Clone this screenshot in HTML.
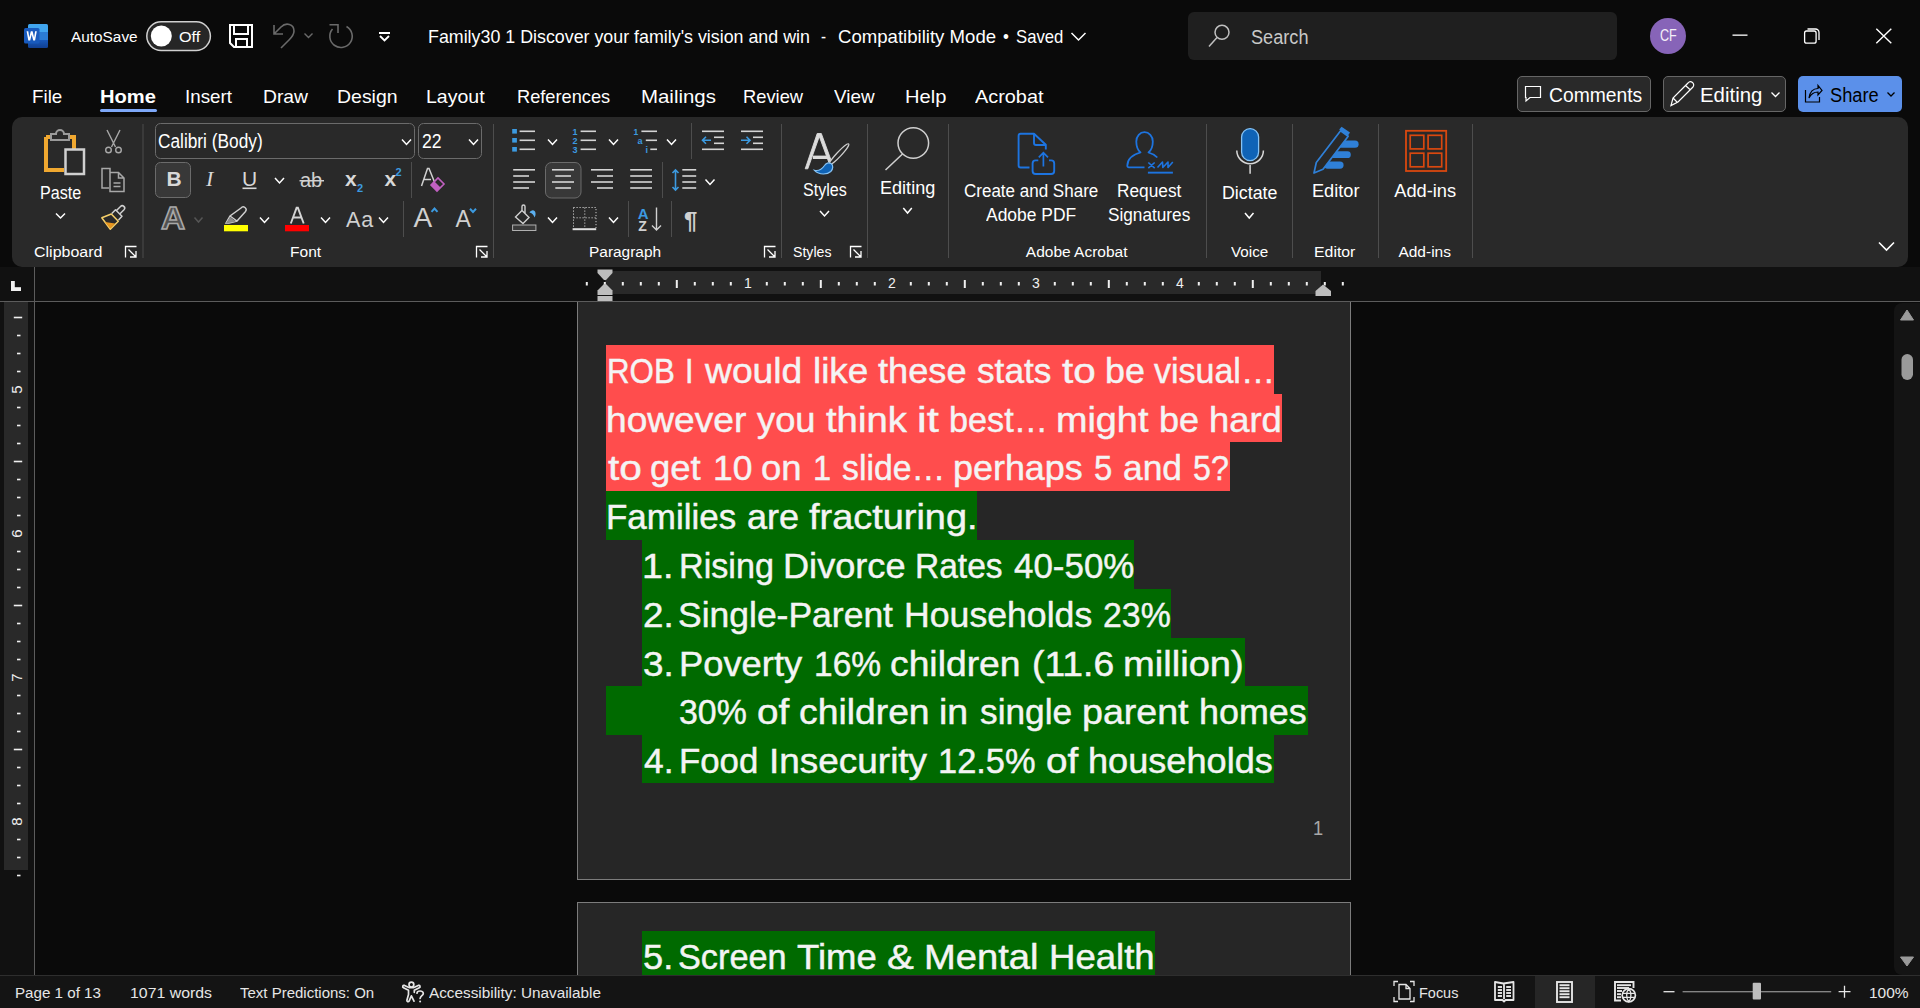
<!DOCTYPE html>
<html><head><meta charset="utf-8"><style>
html,body{margin:0;padding:0;width:1920px;height:1008px;overflow:hidden;background:#0a0a0a;}
body{position:relative;font-family:'Liberation Sans', sans-serif;}
</style></head><body>
<div style="position:absolute;left:0px;top:0px;width:1920px;height:117px;background:#0a0a0a;"></div>
<div style="position:absolute;left:12px;top:117px;width:1896px;height:150px;background:#292929;border-radius:10px;"></div>
<div style="position:absolute;left:0px;top:267px;width:1920px;height:34px;background:#111111;"></div>
<div style="position:absolute;left:605px;top:271px;width:716px;height:23px;background:#292929;"></div>
<div style="position:absolute;left:0px;top:301px;width:1920px;height:1px;background:#5c5c5c;"></div>
<div style="position:absolute;left:0px;top:302px;width:34px;height:674px;background:#111111;"></div>
<div style="position:absolute;left:4px;top:302px;width:24px;height:568px;background:#292929;"></div>
<div style="position:absolute;left:34px;top:267px;width:1px;height:708px;background:#5c5c5c;"></div>
<div style="position:absolute;left:35px;top:302px;width:1859px;height:673px;background:#0a0a0a;"></div>
<div style="position:absolute;left:577px;top:302px;width:774px;height:578px;box-sizing:border-box;background:#262626;border:1px solid #7c7c7c;border-top:none;"></div>
<div style="position:absolute;left:577px;top:902px;width:774px;height:73px;box-sizing:border-box;background:#262626;border:1px solid #7c7c7c;border-bottom:none;"></div>
<div style="position:absolute;left:1894px;top:303px;width:26px;height:672px;background:#141414;border-radius:8px 0 0 8px;"></div>
<div style="position:absolute;left:0px;top:975px;width:1920px;height:1px;background:#2e2e2e;"></div>
<div style="position:absolute;left:0px;top:976px;width:1920px;height:32px;background:#141414;"></div>
<div style="position:absolute;left:1188px;top:12px;width:429px;height:48px;background:#1f1f1f;border-radius:6px;"></div>
<div style="position:absolute;left:1650px;top:18px;width:36px;height:36px;background:#8764b8;border-radius:50%;"></div>
<div style="position:absolute;left:100px;top:109px;width:57px;height:3px;background:#7ea8f8;border-radius:2px;"></div>
<div style="position:absolute;left:1517px;top:76px;width:134px;height:36px;box-sizing:border-box;background:#292929;border:1px solid #666;border-radius:5px;"></div>
<div style="position:absolute;left:1663px;top:76px;width:123px;height:36px;box-sizing:border-box;background:#292929;border:1px solid #666;border-radius:5px;"></div>
<div style="position:absolute;left:1798px;top:76px;width:104px;height:36px;background:#5b90ea;border-radius:5px;"></div>
<svg style="position:absolute;left:0;top:0" width="1920" height="1008" viewBox="0 0 1920 1008"><defs><linearGradient id="wg" x1="0" y1="0" x2="0" y2="1">
<stop offset="0" stop-color="#41a5ee"/><stop offset="0.33" stop-color="#41a5ee"/><stop offset="0.33" stop-color="#2b7cd3"/>
<stop offset="0.66" stop-color="#2b7cd3"/><stop offset="0.66" stop-color="#185abd"/><stop offset="1" stop-color="#103f91"/></linearGradient></defs>
<rect x="28" y="24" width="20" height="24" rx="1.5" fill="url(#wg)"/>
<rect x="24" y="28" width="15.5" height="15.5" rx="1.5" fill="#185abd"/>
<path d="M26.6 31.2 L28.3 40.5 L30.2 40.5 L31.7 34.6 L33.2 40.5 L35.1 40.5 L36.8 31.2 L35.1 31.2 L34.1 37.4 L32.6 31.2 L30.8 31.2 L29.3 37.4 L28.3 31.2 Z" fill="#fff"/>
<rect x="146.8" y="21.8" width="63.6" height="28.6" rx="14.3" fill="#262626" stroke="#d0d0d0" stroke-width="1.5"/>
<circle cx="161.3" cy="36" r="10.5" fill="#fff"/>
<path d="M230 25 H252 V47 H234 L230 43 Z M234 25 V34 H248 V25 M236 47 V39 H247 V47" fill="none" stroke="#ffffff" stroke-width="2"/>
<path d="M274 25 V34 H283 M274 34 L281 27 C286 22 294 24 294 31 C294 35 291 38 289 40 L281 48" fill="none" stroke="#6a6a6a" stroke-width="1.6"/>
<path d="M304.5 33.5 L308.5 37.5 L312.5 33.5" fill="none" stroke="#6a6a6a" stroke-width="1.4"/>
<path d="M346.5 26.5 A11.2 11.2 0 1 1 332.5 29" fill="none" stroke="#6a6a6a" stroke-width="1.6"/><path d="M329.5 24.8 H338 V33" fill="none" stroke="#6a6a6a" stroke-width="1.6"/>
<rect x="379" y="32" width="11" height="2" fill="#ffffff"/><path d="M380 36 L384.5 40.5 L389 36" fill="none" stroke="#ffffff" stroke-width="1.8"/>
<path d="M1071.5 33 L1078.5 40 L1085.5 33" fill="none" stroke="#ffffff" stroke-width="1.5"/>
<circle cx="1222" cy="32.3" r="7" fill="none" stroke="#c0c0c0" stroke-width="1.5"/><path d="M1217 37.5 L1209 46.5" stroke="#c0c0c0" stroke-width="1.5"/>
<rect x="1732.5" y="34.5" width="15" height="1.3" fill="#ffffff"/>
<rect x="1804.6" y="31" width="11.5" height="12.2" rx="2" fill="none" stroke="#ffffff" stroke-width="1.3"/><path d="M1807.5 29 H1815.5 A3.5 3.5 0 0 1 1819 32.5 V40" fill="none" stroke="#ffffff" stroke-width="1.3"/>
<path d="M1876.3 28.8 L1891.3 43.3 M1891.3 28.8 L1876.3 43.3" stroke="#ffffff" stroke-width="1.4"/>
<path d="M1525.5 86.5 H1540.5 V97.5 H1530 L1526 101 V97.5 H1525.5 Z" fill="none" stroke="#ffffff" stroke-width="1.2"/>
<path d="M1671 105.5 L1673 98 L1688 83 A2.5 2.5 0 0 1 1693 87 L1678 102 Z M1673 98 L1677.5 102.5 M1685.5 85.5 L1690.5 90" fill="none" stroke="#ffffff" stroke-width="1.2"/>
<path d="M1771.5 92.5 L1775.5 96.5 L1779.5 92.5" fill="none" stroke="#ffffff" stroke-width="1.3"/>
<path d="M1805.5 90 V102 H1819.5 V97 M1809 98 C1810 91 1814 88.5 1818 88.5 V85.5 L1822 90.5 L1818 95 V92 C1814 92 1811 94 1809 98 Z" fill="none" stroke="#000" stroke-width="1.2"/>
<path d="M1887.5 92.5 L1891 96 L1894.5 92.5" fill="none" stroke="#000" stroke-width="1.3"/>
<rect x="142.5" y="124" width="1" height="134" fill="#4d4d4d"/>
<rect x="493.0" y="124" width="1" height="134" fill="#4d4d4d"/>
<rect x="781.0" y="124" width="1" height="134" fill="#4d4d4d"/>
<rect x="867.0" y="124" width="1" height="134" fill="#4d4d4d"/>
<rect x="948.0" y="124" width="1" height="134" fill="#4d4d4d"/>
<rect x="1206.0" y="124" width="1" height="134" fill="#4d4d4d"/>
<rect x="1292.0" y="124" width="1" height="134" fill="#4d4d4d"/>
<rect x="1378.0" y="124" width="1" height="134" fill="#4d4d4d"/>
<rect x="1472.0" y="124" width="1" height="134" fill="#4d4d4d"/>
<rect x="411.0" y="162" width="1" height="36" fill="#4d4d4d"/>
<rect x="403.0" y="201" width="1" height="36" fill="#4d4d4d"/>
<rect x="691.0" y="123" width="1" height="36" fill="#4d4d4d"/>
<rect x="662.0" y="162" width="1" height="36" fill="#4d4d4d"/>
<rect x="628.0" y="201" width="1" height="36" fill="#4d4d4d"/>
<rect x="671.0" y="201" width="1" height="36" fill="#4d4d4d"/>
<path d="M46 137 H52 M68 137 H74 V149 M46 137 V170 H64" fill="none" stroke="#f0a830" stroke-width="4"/>
<path d="M51 140 V134 H56 A4 4 0 0 1 64 134 H69 V140 Z" fill="none" stroke="#9a9a9a" stroke-width="2"/>
<rect x="65.5" y="149.5" width="18.5" height="24.5" fill="none" stroke="#d0d0d0" stroke-width="2.5"/>
<path d="M56 213.5 L60.5 218 L65 213.5" fill="none" stroke="#ffffff" stroke-width="1.5"/>
<path d="M107 130 L115.5 147 M120 130 L111.5 147" fill="none" stroke="#a8a8a8" stroke-width="1.4"/><circle cx="108.5" cy="150" r="2.8" fill="none" stroke="#a8a8a8" stroke-width="1.4"/><circle cx="118.5" cy="150" r="2.8" fill="none" stroke="#a8a8a8" stroke-width="1.4"/>
<path d="M110 172 V168.5 H102 V188 H109" fill="none" stroke="#a8a8a8" stroke-width="1.5"/><path d="M110 172.5 H118.5 L124 178 V191.5 H110 Z M118.5 172.5 V178 H124 M113.5 183 H120.5 M113.5 186.5 H120.5" fill="none" stroke="#a8a8a8" stroke-width="1.5"/>
<path d="M101.8 217.8 L111.3 214 L118.3 221.2 L110.3 229.2 Z" fill="none" stroke="#f5cf6a" stroke-width="1.5" stroke-linejoin="round"/>
<path d="M105 222 L115 223.5 L110.3 228.5 Z" fill="#e8961e"/>
<path d="M111.8 213.5 L115.5 209.8 L122 216.3 L118.5 220" fill="none" stroke="#d0d0d0" stroke-width="1.5" stroke-linejoin="round"/>
<path d="M116.5 210.5 L120.5 206.5 A2.2 2.2 0 0 1 124 209.8 L120 213.8" fill="none" stroke="#d0d0d0" stroke-width="1.5"/>
<path d="M125.5 257.5 V246.5 H136.5 M128.5 249.5 L136 257 M136 251 V257 H130" fill="none" stroke="#ffffff" stroke-width="1.3"/>
<path d="M476.5 257.5 V246.5 H487.5 M479.5 249.5 L487 257 M487 251 V257 H481" fill="none" stroke="#ffffff" stroke-width="1.3"/>
<path d="M764.5 257.5 V246.5 H775.5 M767.5 249.5 L775 257 M775 251 V257 H769" fill="none" stroke="#ffffff" stroke-width="1.3"/>
<path d="M850.5 257.5 V246.5 H861.5 M853.5 249.5 L861 257 M861 251 V257 H855" fill="none" stroke="#ffffff" stroke-width="1.3"/>
<rect x="155.5" y="123.5" width="259" height="35" rx="5" fill="none" stroke="#6b6b6b" stroke-width="1"/>
<rect x="418.5" y="123.5" width="63" height="35" rx="5" fill="none" stroke="#6b6b6b" stroke-width="1"/>
<path d="M402 139.5 L406.5 144.5 L411 139.5" fill="none" stroke="#ffffff" stroke-width="1.5"/>
<path d="M469 139.5 L473.5 144.5 L478 139.5" fill="none" stroke="#ffffff" stroke-width="1.5"/>
<rect x="155.5" y="162.5" width="35" height="35" rx="5" fill="#383838" stroke="#6b6b6b" stroke-width="1"/>
<text x="166.5" y="185.8" font-family="Liberation Sans" font-weight="bold" font-size="21" fill="#d8d8d8">B</text>
<text x="206" y="185.8" font-family="Liberation Serif" font-style="italic" font-size="22" fill="#d8d8d8">I</text>
<text x="242" y="185.8" font-family="Liberation Sans" font-size="21" fill="#d8d8d8">U</text><rect x="242.5" y="187.5" width="14" height="1.6" fill="#d8d8d8"/>
<path d="M275 178 L279.5 183 L284 178" fill="none" stroke="#ffffff" stroke-width="1.5"/>
<text x="300" y="187" font-family="Liberation Sans" font-size="20" fill="#d0d0d0">ab</text><rect x="299.5" y="180" width="24.5" height="1.5" fill="#d0d0d0"/>
<text x="345" y="185.8" font-family="Liberation Sans" font-weight="bold" font-size="21" fill="#d8d8d8">x</text><text x="357" y="191.5" font-family="Liberation Sans" font-weight="bold" font-size="11" fill="#3c9ae0">2</text>
<text x="384.5" y="185.8" font-family="Liberation Sans" font-weight="bold" font-size="21" fill="#d8d8d8">x</text><text x="395.5" y="176" font-family="Liberation Sans" font-weight="bold" font-size="11" fill="#3c9ae0">2</text>
<path d="M421.5 186 L427.5 168.5 H429 L434.5 182 M424 179.5 H431" fill="none" stroke="#d0d0d0" stroke-width="1.5"/><path d="M431 185 L438 178 L444 184 L437 191 Z" fill="none" stroke="#c060c0" stroke-width="1.6"/><path d="M431 185 L434.5 181.5 L440.5 187.5 L437 191 Z" fill="#c060c0"/>
<text x="161" y="229.3" font-family="Liberation Sans" font-weight="bold" font-size="31" fill="#505050" stroke="#a8a8a8" stroke-width="1.5" transform="translate(161 0) scale(1.08 1) translate(-161 0)">A</text>
<path d="M194.5 217.5 L198.5 222.0 L202.5 217.5" fill="none" stroke="#555" stroke-width="1.5"/>
<path d="M226 223 L230 216 L241 208 A2 2 0 0 1 245.5 211.5 L237 221 L229 223 Z M230 216 L237 221" fill="none" stroke="#d0d0d0" stroke-width="1.4"/><path d="M226 223 L230 217 L236 221.5 L229 223 Z" fill="#8a8a8a"/>
<rect x="224" y="225" width="24" height="6.3" fill="#ffff00"/>
<path d="M260 217.5 L264.5 222.5 L269 217.5" fill="none" stroke="#ffffff" stroke-width="1.5"/>
<path d="M290.8 223.5 L296.6 207.8 H297.9 L303.7 223.5 M293.2 217.5 H301.3" fill="none" stroke="#d4d4d4" stroke-width="1.9"/><rect x="285" y="225" width="24" height="6.3" fill="#ff0000"/>
<path d="M321 217.5 L325.5 222.5 L330 217.5" fill="none" stroke="#ffffff" stroke-width="1.5"/>
<text x="346" y="226.8" font-family="Liberation Sans" font-size="21.5" letter-spacing="1" fill="#d0d0d0">Aa</text>
<path d="M379 217.5 L383.5 222.5 L388 217.5" fill="none" stroke="#ffffff" stroke-width="1.5"/>
<text x="413.5" y="227" font-family="Liberation Sans" font-size="28" fill="#d0d0d0">A</text><path d="M431.5 211.8 L434.5 208.5 L437.5 211.8" fill="none" stroke="#3c9ae0" stroke-width="2"/>
<text x="455.5" y="227" font-family="Liberation Sans" font-size="23" fill="#d0d0d0">A</text><path d="M470 208.8 L473 212 L476 208.8" fill="none" stroke="#3c9ae0" stroke-width="2"/>
<rect x="512.2" y="129.0" width="4.7" height="4.6" fill="#3c9ae0"/>
<rect x="519.6" y="130.5" width="15.399999999999977" height="1.6" fill="#d4d4d4"/>
<rect x="512.2" y="138.0" width="4.7" height="4.6" fill="#3c9ae0"/>
<rect x="519.6" y="139.5" width="15.399999999999977" height="1.6" fill="#d4d4d4"/>
<rect x="512.2" y="147.0" width="4.7" height="4.6" fill="#3c9ae0"/>
<rect x="519.6" y="148.5" width="15.399999999999977" height="1.6" fill="#d4d4d4"/>
<path d="M548 139.5 L552.5 144.5 L557 139.5" fill="none" stroke="#ffffff" stroke-width="1.5"/>
<text x="572.6" y="134.70000000000002" font-family="Liberation Sans" font-weight="bold" font-size="9" fill="#3c9ae0">1</text>
<rect x="580.6" y="130.5" width="15.399999999999977" height="1.6" fill="#d4d4d4"/>
<text x="572.6" y="143.70000000000002" font-family="Liberation Sans" font-weight="bold" font-size="9" fill="#3c9ae0">2</text>
<rect x="580.6" y="139.5" width="15.399999999999977" height="1.6" fill="#d4d4d4"/>
<text x="572.6" y="152.70000000000002" font-family="Liberation Sans" font-weight="bold" font-size="9" fill="#3c9ae0">3</text>
<rect x="580.6" y="148.5" width="15.399999999999977" height="1.6" fill="#d4d4d4"/>
<path d="M609 139.5 L613.5 144.5 L618 139.5" fill="none" stroke="#ffffff" stroke-width="1.5"/>
<text x="633.5" y="134.8" font-family="Liberation Sans" font-weight="bold" font-size="8.5" fill="#3c9ae0">1</text>
<rect x="641.4" y="130.5" width="15.600000000000023" height="1.6" fill="#d4d4d4"/>
<text x="637.6" y="143.8" font-family="Liberation Sans" font-weight="bold" font-size="9" fill="#3c9ae0">a</text>
<rect x="645.8" y="139.5" width="11.200000000000045" height="1.6" fill="#d4d4d4"/>
<text x="645.4" y="152.8" font-family="Liberation Sans" font-weight="bold" font-size="9" fill="#3c9ae0">i</text>
<rect x="650.3" y="148.5" width="6.7000000000000455" height="1.6" fill="#d4d4d4"/>
<path d="M667 139.5 L671.5 144.5 L676 139.5" fill="none" stroke="#ffffff" stroke-width="1.5"/>
<rect x="702" y="130.5" width="22" height="1.6" fill="#d4d4d4"/>
<rect x="714" y="136.5" width="10" height="1.6" fill="#d4d4d4"/>
<rect x="714" y="142.5" width="10" height="1.6" fill="#d4d4d4"/>
<rect x="702" y="148.5" width="22" height="1.6" fill="#d4d4d4"/>
<path d="M711 140.3 H702.5 M706 136.8 L702.5 140.3 L706 143.8" fill="none" stroke="#3c9ae0" stroke-width="1.6"/>
<rect x="741" y="130.5" width="22" height="1.6" fill="#d4d4d4"/>
<rect x="753" y="136.5" width="10" height="1.6" fill="#d4d4d4"/>
<rect x="753" y="142.5" width="10" height="1.6" fill="#d4d4d4"/>
<rect x="741" y="148.5" width="22" height="1.6" fill="#d4d4d4"/>
<path d="M741 140.3 H750 M746.5 136.8 L750 140.3 L746.5 143.8" fill="none" stroke="#3c9ae0" stroke-width="1.6"/>
<rect x="513.2" y="169.0" width="21.799999999999955" height="1.6" fill="#d4d4d4"/>
<rect x="513.2" y="175.2" width="15.799999999999955" height="1.6" fill="#d4d4d4"/>
<rect x="513.2" y="181.2" width="21.799999999999955" height="1.6" fill="#d4d4d4"/>
<rect x="513.2" y="187.2" width="15.799999999999955" height="1.6" fill="#d4d4d4"/>
<rect x="545.5" y="162.5" width="35.5" height="35.5" rx="6" fill="#383838" stroke="#6b6b6b" stroke-width="1"/>
<rect x="552" y="169.0" width="22" height="1.6" fill="#d4d4d4"/>
<rect x="555.3" y="175.2" width="15.700000000000045" height="1.6" fill="#d4d4d4"/>
<rect x="552" y="181.2" width="22" height="1.6" fill="#d4d4d4"/>
<rect x="555.3" y="187.2" width="15.700000000000045" height="1.6" fill="#d4d4d4"/>
<rect x="591" y="169.0" width="22" height="1.6" fill="#d4d4d4"/>
<rect x="597" y="175.2" width="16" height="1.6" fill="#d4d4d4"/>
<rect x="591" y="181.2" width="22" height="1.6" fill="#d4d4d4"/>
<rect x="597" y="187.2" width="16" height="1.6" fill="#d4d4d4"/>
<rect x="630.2" y="169.0" width="21.799999999999955" height="1.6" fill="#d4d4d4"/>
<rect x="630.2" y="175.2" width="21.799999999999955" height="1.6" fill="#d4d4d4"/>
<rect x="630.2" y="181.2" width="21.799999999999955" height="1.6" fill="#d4d4d4"/>
<rect x="630.2" y="187.2" width="21.799999999999955" height="1.6" fill="#d4d4d4"/>
<path d="M675.5 170 V190 M672.5 173 L675.5 170 L678.5 173 M672.5 187 L675.5 190 L678.5 187" fill="none" stroke="#3c9ae0" stroke-width="1.6"/>
<rect x="682.3" y="169.0" width="13.900000000000091" height="1.6" fill="#d4d4d4"/>
<rect x="682.3" y="175.2" width="13.900000000000091" height="1.6" fill="#d4d4d4"/>
<rect x="682.3" y="181.2" width="13.900000000000091" height="1.6" fill="#d4d4d4"/>
<rect x="682.3" y="187.2" width="13.900000000000091" height="1.6" fill="#d4d4d4"/>
<path d="M705.5 179.5 L710.0 184.5 L714.5 179.5" fill="none" stroke="#ffffff" stroke-width="1.5"/>
<path d="M515.5 217 L522 210.5 L529 217.5 L523 223.5 Z M522 210.5 V206.5 A1.5 1.5 0 0 1 525 206.5 V213" fill="none" stroke="#d0d0d0" stroke-width="1.4"/><path d="M529.5 212.5 C531 209.5 535 209 535.5 213 C535.8 215 535 216.5 534.5 217.5 C534 215.5 532.5 213 529.5 212.5 Z" fill="#5cb0f0"/>
<rect x="512.6" y="225" width="23.3" height="5.5" fill="#3a3a3a" stroke="#b0b0b0" stroke-width="1"/>
<path d="M548 217.5 L552.5 222.5 L557 217.5" fill="none" stroke="#ffffff" stroke-width="1.5"/>
<path d="M573.5 207.5 H596 V228 M573.5 207.5 V228 M584.8 207.5 V228 M573.5 217.8 H596" fill="none" stroke="#c8c8c8" stroke-width="1" stroke-dasharray="1.2 1.8"/><rect x="572.6" y="228.2" width="23.6" height="2" fill="#e0e0e0"/>
<path d="M609 217.5 L613.5 222.5 L618 217.5" fill="none" stroke="#ffffff" stroke-width="1.5"/>
<text x="637.8" y="218.5" font-family="Liberation Sans" font-weight="bold" font-size="15" fill="#3c9ae0">A</text><text x="638.3" y="231.3" font-family="Liberation Sans" font-weight="bold" font-size="14" fill="#d0d0d0">Z</text><path d="M656.5 207.5 V230 M652 225.5 L656.5 230 L661 225.5" fill="none" stroke="#d0d0d0" stroke-width="1.4"/>
<text x="684" y="228.5" font-family="Liberation Sans" font-weight="bold" font-size="24" fill="#d0d0d0">¶</text>
<path d="M805.2 168.8 L817.2 133.5 H821.3 L830.8 159.5 L828.8 162.3 L819.3 136.5 L807.8 168.8 Z" fill="#dcdcdc" stroke="#dcdcdc" stroke-width="0.9" stroke-linejoin="round"/>
<path d="M812.8 157.3 H828.5" stroke="#dcdcdc" stroke-width="3.4"/>
<ellipse cx="839" cy="154.3" rx="14.2" ry="2.3" transform="rotate(-47 839 154.3)" fill="none" stroke="#d0d0d0" stroke-width="1.2"/>
<path d="M814.5 170.3 C819.5 171.3 822.5 168.5 824.5 165.5 C826 163 829 162.3 831 163.5 C833.5 165 833.2 169 830.8 171.5 C827.5 174.5 819.5 175.5 814.5 170.3 Z" fill="#0f63b6" stroke="#86c3f5" stroke-width="1.2"/>
<path d="M820 211 L824.5 216 L829 211" fill="none" stroke="#ffffff" stroke-width="1.5"/>
<circle cx="913.3" cy="143" r="15.3" fill="none" stroke="#cfcfcf" stroke-width="1.5"/><path d="M902.5 154 L885.5 170" stroke="#cfcfcf" stroke-width="1.5"/>
<path d="M903.3 208 L907.55 213 L911.8 208" fill="none" stroke="#ffffff" stroke-width="1.5"/>
<path d="M1029.5 167.5 H1020.6 A2 2 0 0 1 1018.6 165.5 V135.7 A2 2 0 0 1 1020.6 133.7 H1034 L1045.8 144.8 V149.5" fill="none" stroke="#1d74e0" stroke-width="1.9" stroke-linejoin="round"/>
<path d="M1034 133.7 V143 A2 2 0 0 0 1036 145 H1045.8" fill="none" stroke="#1d74e0" stroke-width="1.9"/>
<path d="M1038.3 160.4 H1035.6 A3 3 0 0 0 1032.6 163.4 V171 A3 3 0 0 0 1035.6 174 H1051.2 A3 3 0 0 0 1054.2 171 V163.4 A3 3 0 0 0 1051.2 160.4 H1049" fill="none" stroke="#1d74e0" stroke-width="1.9"/>
<path d="M1043.4 166.5 V152.8 M1038.8 157.3 L1043.4 152.6 L1048 157.3" fill="none" stroke="#1d74e0" stroke-width="1.7"/>
<path d="M1144.5 167.3 H1128.8 A1.5 1.5 0 0 1 1127.3 165.8 C1127.3 159 1133 154.5 1140.5 152.5 C1137 149.5 1136.3 146 1136.3 141.5 C1136.3 136 1140 132.2 1144.5 132.2 C1149 132.2 1152.8 136 1152.8 141.5 C1152.8 146 1152 149.5 1148.5 152.5 C1151.5 153.3 1155 155 1157.3 157.5" fill="none" stroke="#1d74e0" stroke-width="1.8" stroke-linejoin="round"/>
<path d="M1148.3 162.5 L1154.7 168.2 M1154.7 162.5 L1148.3 168.2 M1157.5 167.5 L1162.5 162 L1162.8 167.5 L1168 162 L1168 167.5 L1172.8 162" fill="none" stroke="#1d74e0" stroke-width="1.6" stroke-linejoin="round"/><rect x="1147.9" y="171.7" width="25" height="1.9" fill="#1d74e0"/>
<rect x="1241.6" y="128.6" width="17" height="32" rx="8.5" fill="#0f63b6" stroke="#86c3f5" stroke-width="1.3"/><path d="M1236.8 150.5 A13.3 13.3 0 0 0 1263.4 150.5" fill="none" stroke="#d8d8d8" stroke-width="1.5"/><path d="M1250.1 165 V173.8" stroke="#d8d8d8" stroke-width="1.5"/>
<path d="M1245 213 L1249.25 218 L1253.5 213" fill="none" stroke="#ffffff" stroke-width="1.5"/>
<rect x="1338" y="140.6" width="20.6" height="7.2" rx="3.6" fill="#2f80d8"/><rect x="1331" y="151.3" width="19.8" height="6.8" rx="3.4" fill="#2f80d8"/><rect x="1324" y="161.5" width="19.6" height="7.2" rx="3.6" fill="#2f80d8"/>
<path d="M1314 173 L1316.3 162.5 L1340.6 130.8 L1348.2 136.3 L1323 169.3 Z" fill="#292929" stroke="#2f80d8" stroke-width="1.7" stroke-linejoin="round"/>
<path d="M1339.2 129.6 L1341.6 126.8 L1350 132.6 L1347.8 135.8 Z" fill="#2f80d8"/>
<rect x="1406" y="130.8" width="40.2" height="40.2" fill="none" stroke="#d9480f" stroke-width="1.8"/>
<rect x="1410.2" y="135.3" width="13.6" height="13.6" fill="none" stroke="#d9480f" stroke-width="1.7"/>
<rect x="1410.2" y="153.2" width="13.6" height="13.6" fill="none" stroke="#d9480f" stroke-width="1.7"/>
<rect x="1428.1" y="135.3" width="13.6" height="13.6" fill="none" stroke="#d9480f" stroke-width="1.7"/>
<rect x="1428.1" y="153.2" width="13.6" height="13.6" fill="none" stroke="#d9480f" stroke-width="1.7"/>
<path d="M1879 242.5 L1886.5 250 L1894 242.5" fill="none" stroke="#ffffff" stroke-width="1.6"/>
<rect x="11" y="281" width="3.8" height="10" fill="#f0f0f0"/><rect x="11" y="287.2" width="10" height="3.8" fill="#f0f0f0"/>
<rect x="585.8" y="282" width="2" height="3.5" fill="#f0f0f0"/>
<rect x="603.8" y="282" width="2" height="3.5" fill="#f0f0f0"/>
<rect x="621.8" y="282" width="2" height="3.5" fill="#f0f0f0"/>
<rect x="639.8" y="282" width="2" height="3.5" fill="#f0f0f0"/>
<rect x="657.8" y="282" width="2" height="3.5" fill="#f0f0f0"/>
<rect x="675.8" y="280" width="2" height="8" fill="#f0f0f0"/>
<rect x="693.8" y="282" width="2" height="3.5" fill="#f0f0f0"/>
<rect x="711.8" y="282" width="2" height="3.5" fill="#f0f0f0"/>
<rect x="729.8" y="282" width="2" height="3.5" fill="#f0f0f0"/>
<rect x="765.8" y="282" width="2" height="3.5" fill="#f0f0f0"/>
<rect x="783.8" y="282" width="2" height="3.5" fill="#f0f0f0"/>
<rect x="801.8" y="282" width="2" height="3.5" fill="#f0f0f0"/>
<rect x="819.8" y="280" width="2" height="8" fill="#f0f0f0"/>
<rect x="837.8" y="282" width="2" height="3.5" fill="#f0f0f0"/>
<rect x="855.8" y="282" width="2" height="3.5" fill="#f0f0f0"/>
<rect x="873.8" y="282" width="2" height="3.5" fill="#f0f0f0"/>
<rect x="909.8" y="282" width="2" height="3.5" fill="#f0f0f0"/>
<rect x="927.8" y="282" width="2" height="3.5" fill="#f0f0f0"/>
<rect x="945.8" y="282" width="2" height="3.5" fill="#f0f0f0"/>
<rect x="963.8" y="280" width="2" height="8" fill="#f0f0f0"/>
<rect x="981.8" y="282" width="2" height="3.5" fill="#f0f0f0"/>
<rect x="999.8" y="282" width="2" height="3.5" fill="#f0f0f0"/>
<rect x="1017.8" y="282" width="2" height="3.5" fill="#f0f0f0"/>
<rect x="1053.8" y="282" width="2" height="3.5" fill="#f0f0f0"/>
<rect x="1071.8" y="282" width="2" height="3.5" fill="#f0f0f0"/>
<rect x="1089.8" y="282" width="2" height="3.5" fill="#f0f0f0"/>
<rect x="1107.8" y="280" width="2" height="8" fill="#f0f0f0"/>
<rect x="1125.8" y="282" width="2" height="3.5" fill="#f0f0f0"/>
<rect x="1143.8" y="282" width="2" height="3.5" fill="#f0f0f0"/>
<rect x="1161.8" y="282" width="2" height="3.5" fill="#f0f0f0"/>
<rect x="1197.8" y="282" width="2" height="3.5" fill="#f0f0f0"/>
<rect x="1215.8" y="282" width="2" height="3.5" fill="#f0f0f0"/>
<rect x="1233.8" y="282" width="2" height="3.5" fill="#f0f0f0"/>
<rect x="1251.8" y="280" width="2" height="8" fill="#f0f0f0"/>
<rect x="1269.8" y="282" width="2" height="3.5" fill="#f0f0f0"/>
<rect x="1287.8" y="282" width="2" height="3.5" fill="#f0f0f0"/>
<rect x="1305.8" y="282" width="2" height="3.5" fill="#f0f0f0"/>
<rect x="1323.8" y="282" width="2" height="3.5" fill="#f0f0f0"/>
<rect x="1341.8" y="282" width="2" height="3.5" fill="#f0f0f0"/>
<text x="748" y="288" text-anchor="middle" font-family="Liberation Sans" font-size="14" fill="#f0f0f0">1</text>
<text x="892" y="288" text-anchor="middle" font-family="Liberation Sans" font-size="14" fill="#f0f0f0">2</text>
<text x="1036" y="288" text-anchor="middle" font-family="Liberation Sans" font-size="14" fill="#f0f0f0">3</text>
<text x="1180" y="288" text-anchor="middle" font-family="Liberation Sans" font-size="14" fill="#f0f0f0">4</text>
<path d="M597.5 269.5 H612.5 V273 L606 280 H604 L597.5 273 Z" fill="#bdbdbd"/><path d="M604 284 H606 L612.5 290.5 V295 H597.5 V290.5 Z" fill="#bdbdbd"/><rect x="597.5" y="296" width="15" height="5" fill="#bdbdbd"/>
<path d="M1323 284.5 L1331 291 V296 H1315.5 V291 Z" fill="#bdbdbd"/>
<rect x="13.8" y="316.7" width="8.4" height="1.6" fill="#f0f0f0"/>
<rect x="17" y="334.7" width="3.5" height="1.6" fill="#f0f0f0"/>
<rect x="17" y="352.7" width="3.5" height="1.6" fill="#f0f0f0"/>
<rect x="17" y="370.7" width="3.5" height="1.6" fill="#f0f0f0"/>
<rect x="17" y="406.7" width="3.5" height="1.6" fill="#f0f0f0"/>
<rect x="17" y="424.7" width="3.5" height="1.6" fill="#f0f0f0"/>
<rect x="17" y="442.7" width="3.5" height="1.6" fill="#f0f0f0"/>
<rect x="13.8" y="460.7" width="8.4" height="1.6" fill="#f0f0f0"/>
<rect x="17" y="478.7" width="3.5" height="1.6" fill="#f0f0f0"/>
<rect x="17" y="496.7" width="3.5" height="1.6" fill="#f0f0f0"/>
<rect x="17" y="514.7" width="3.5" height="1.6" fill="#f0f0f0"/>
<rect x="17" y="550.7" width="3.5" height="1.6" fill="#f0f0f0"/>
<rect x="17" y="568.7" width="3.5" height="1.6" fill="#f0f0f0"/>
<rect x="17" y="586.7" width="3.5" height="1.6" fill="#f0f0f0"/>
<rect x="13.8" y="604.7" width="8.4" height="1.6" fill="#f0f0f0"/>
<rect x="17" y="622.7" width="3.5" height="1.6" fill="#f0f0f0"/>
<rect x="17" y="640.7" width="3.5" height="1.6" fill="#f0f0f0"/>
<rect x="17" y="658.7" width="3.5" height="1.6" fill="#f0f0f0"/>
<rect x="17" y="694.7" width="3.5" height="1.6" fill="#f0f0f0"/>
<rect x="17" y="712.7" width="3.5" height="1.6" fill="#f0f0f0"/>
<rect x="17" y="730.7" width="3.5" height="1.6" fill="#f0f0f0"/>
<rect x="13.8" y="748.7" width="8.4" height="1.6" fill="#f0f0f0"/>
<rect x="17" y="766.7" width="3.5" height="1.6" fill="#f0f0f0"/>
<rect x="17" y="784.7" width="3.5" height="1.6" fill="#f0f0f0"/>
<rect x="17" y="802.7" width="3.5" height="1.6" fill="#f0f0f0"/>
<rect x="17" y="838.7" width="3.5" height="1.6" fill="#f0f0f0"/>
<rect x="17" y="856.7" width="3.5" height="1.6" fill="#f0f0f0"/>
<rect x="17" y="874.7" width="3.5" height="1.6" fill="#f0f0f0"/>
<text x="0" y="0" transform="translate(22.3,389.5) rotate(-90)" text-anchor="middle" font-family="Liberation Sans" font-size="15" fill="#f0f0f0">5</text>
<text x="0" y="0" transform="translate(22.3,533.5) rotate(-90)" text-anchor="middle" font-family="Liberation Sans" font-size="15" fill="#f0f0f0">6</text>
<text x="0" y="0" transform="translate(22.3,677.5) rotate(-90)" text-anchor="middle" font-family="Liberation Sans" font-size="15" fill="#f0f0f0">7</text>
<text x="0" y="0" transform="translate(22.3,821.5) rotate(-90)" text-anchor="middle" font-family="Liberation Sans" font-size="15" fill="#f0f0f0">8</text>
<path d="M1907 310 L1913.5 320 H1900.5 Z" fill="#9a9a9a" stroke="#9a9a9a" stroke-width="1" stroke-linejoin="round"/>
<rect x="1901.5" y="354" width="11.5" height="26" rx="5.75" fill="#9a9a9a"/>
<path d="M1907 966 L1913.5 957 H1900.5 Z" fill="#9a9a9a" stroke="#9a9a9a" stroke-width="1" stroke-linejoin="round"/>
<circle cx="411.4" cy="984.6" r="2.4" fill="none" stroke="#e6e6e6" stroke-width="1.7"/>
<path d="M414.3 992.3 V990.3 L419.3 987.8 A1.3 1.3 0 0 0 418.3 985.4 L413.3 987.7 H409.5 L404.5 985.4 A1.3 1.3 0 0 0 403.5 987.8 L408.5 990.3 V994.5 L406.9 1000.3 A1.2 1.2 0 0 0 409.1 1001.1 L411.4 995.8 L414 1001.2" fill="none" stroke="#e6e6e6" stroke-width="1.7" stroke-linejoin="round" stroke-linecap="round"/>
<path d="M417 993.2 C417 990.5 423.3 990 423.3 993.5 C423.3 995.5 420.3 996 420.1 998.5" fill="none" stroke="#e6e6e6" stroke-width="1.7" stroke-linecap="round"/><circle cx="420.1" cy="1001.6" r="1" fill="#e6e6e6"/>
<path d="M1394 986 V981.5 H1398 M1410 981.5 H1414 V986 M1414 997 V1001.5 H1410 M1398 1001.5 H1394 V997" fill="none" stroke="#e6e6e6" stroke-width="1.3"/><path d="M1399 984.5 H1406 L1410 988.5 V999 H1399 Z M1406 984.5 V988.5 H1410" fill="none" stroke="#e6e6e6" stroke-width="1.3"/>
<path d="M1495 982 L1503.5 983.5 L1513.5 982 V1000 H1505.5 L1504 1001.5 L1502.5 1000 H1495 Z M1504 984 V999" fill="none" stroke="#e6e6e6" stroke-width="1.8" stroke-linejoin="round"/>
<rect x="1497.8" y="986.05" width="4.2000000000000455" height="1.9" fill="#e6e6e6"/>
<rect x="1506.2" y="986.05" width="4.7999999999999545" height="1.9" fill="#e6e6e6"/>
<rect x="1497.8" y="989.05" width="4.2000000000000455" height="1.9" fill="#e6e6e6"/>
<rect x="1506.2" y="989.05" width="4.7999999999999545" height="1.9" fill="#e6e6e6"/>
<rect x="1497.8" y="992.05" width="4.2000000000000455" height="1.9" fill="#e6e6e6"/>
<rect x="1506.2" y="992.05" width="4.7999999999999545" height="1.9" fill="#e6e6e6"/>
<rect x="1497.8" y="995.05" width="4.2000000000000455" height="1.9" fill="#e6e6e6"/>
<rect x="1506.2" y="995.05" width="4.7999999999999545" height="1.9" fill="#e6e6e6"/>
<rect x="1535" y="976" width="60" height="32" fill="#262626"/>
<rect x="1557" y="982" width="15" height="20" fill="none" stroke="#e6e6e6" stroke-width="1.9"/>
<rect x="1559.5" y="984.25" width="10.0" height="1.9" fill="#e6e6e6"/>
<rect x="1559.5" y="987.25" width="10.0" height="1.9" fill="#e6e6e6"/>
<rect x="1559.5" y="990.25" width="10.0" height="1.9" fill="#e6e6e6"/>
<rect x="1559.5" y="993.25" width="10.0" height="1.9" fill="#e6e6e6"/>
<rect x="1559.5" y="996.25" width="10.0" height="1.9" fill="#e6e6e6"/>
<path d="M1621 1000.5 H1615 V982 H1633.5 V988" fill="none" stroke="#e6e6e6" stroke-width="1.9"/>
<rect x="1617" y="984.25" width="14" height="1.9" fill="#e6e6e6"/>
<rect x="1617" y="987.05" width="12" height="1.9" fill="#e6e6e6"/>
<rect x="1617" y="990.05" width="5" height="1.9" fill="#e6e6e6"/>
<rect x="1617" y="993.25" width="4" height="1.9" fill="#e6e6e6"/>
<rect x="1617" y="996.25" width="4" height="1.9" fill="#e6e6e6"/>
<circle cx="1628.8" cy="995.3" r="6.6" fill="#141414" stroke="#e6e6e6" stroke-width="1.7"/><path d="M1622.5 993.3 H1635 M1622.5 997.3 H1635 M1628.8 989 C1626 991.5 1626 999 1628.8 1001.8 C1631.6 999 1631.6 991.5 1628.8 989" fill="none" stroke="#e6e6e6" stroke-width="1.3"/>
<rect x="1663.5" y="991.0500000000001" width="11.0" height="1.3" fill="#e6e6e6"/>
<rect x="1682.6" y="991.0500000000001" width="148.60000000000014" height="1.3" fill="#8a8a8a"/>
<rect x="1752.7" y="982.7" width="8.3" height="16.8" rx="1" fill="#bdbdbd"/>
<path d="M1838.6 991.7 H1850.5 M1844.5 985.7 V997.7" stroke="#e6e6e6" stroke-width="1.3"/></svg>
<div style="position:absolute;left:71.00px;top:29.38px;font:15.5px/15.5px 'Liberation Sans', sans-serif;color:#fff;white-space:pre;transform:scaleX(0.9911);transform-origin:0 0;">AutoSave</div>
<div style="position:absolute;left:179.00px;top:29.38px;font:15.5px/15.5px 'Liberation Sans', sans-serif;color:#fff;white-space:pre;transform:scaleX(1.0435);transform-origin:0 0;">Off</div>
<div style="position:absolute;left:428.06px;top:26.91px;font:19px/19px 'Liberation Sans', sans-serif;color:#fff;white-space:pre;transform:scaleX(0.9383);transform-origin:0 0;">Family30 1 Discover your family's vision and win</div>
<div style="position:absolute;left:821.00px;top:26.91px;font:19px/19px 'Liberation Sans', sans-serif;color:#fff;white-space:pre;transform:scaleX(0.8000);transform-origin:0 0;">-</div>
<div style="position:absolute;left:837.50px;top:26.91px;font:19px/19px 'Liberation Sans', sans-serif;color:#fff;white-space:pre;transform:scaleX(0.9783);transform-origin:0 0;">Compatibility Mode</div>
<div style="position:absolute;left:1003.00px;top:26.91px;font:19px/19px 'Liberation Sans', sans-serif;color:#fff;white-space:pre;transform:scaleX(0.8833);transform-origin:0 0;">•</div>
<div style="position:absolute;left:1016.40px;top:26.91px;font:19px/19px 'Liberation Sans', sans-serif;color:#fff;white-space:pre;transform:scaleX(0.8798);transform-origin:0 0;">Saved</div>
<div style="position:absolute;left:1250.50px;top:28.49px;font:19.5px/19.5px 'Liberation Sans', sans-serif;color:#c8c8c8;white-space:pre;transform:scaleX(0.9304);transform-origin:0 0;">Search</div>
<div style="position:absolute;left:1659.70px;top:28.45px;font:16px/16px 'Liberation Sans', sans-serif;color:#f4f0f8;white-space:pre;transform:scaleX(0.7887);transform-origin:0 0;">CF</div>
<div style="position:absolute;left:32.01px;top:86.91px;font:19px/19px 'Liberation Sans', sans-serif;color:#fff;white-space:pre;transform:scaleX(0.9880);transform-origin:0 0;">File</div>
<div style="position:absolute;left:184.81px;top:86.91px;font:19px/19px 'Liberation Sans', sans-serif;color:#fff;white-space:pre;transform:scaleX(0.9886);transform-origin:0 0;">Insert</div>
<div style="position:absolute;left:262.68px;top:86.91px;font:19px/19px 'Liberation Sans', sans-serif;color:#fff;white-space:pre;transform:scaleX(1.0157);transform-origin:0 0;">Draw</div>
<div style="position:absolute;left:336.68px;top:86.91px;font:19px/19px 'Liberation Sans', sans-serif;color:#fff;white-space:pre;transform:scaleX(1.0247);transform-origin:0 0;">Design</div>
<div style="position:absolute;left:426.27px;top:86.91px;font:19px/19px 'Liberation Sans', sans-serif;color:#fff;white-space:pre;transform:scaleX(1.0270);transform-origin:0 0;">Layout</div>
<div style="position:absolute;left:516.54px;top:86.91px;font:19px/19px 'Liberation Sans', sans-serif;color:#fff;white-space:pre;transform:scaleX(0.9586);transform-origin:0 0;">References</div>
<div style="position:absolute;left:640.83px;top:86.91px;font:19px/19px 'Liberation Sans', sans-serif;color:#fff;white-space:pre;transform:scaleX(1.0749);transform-origin:0 0;">Mailings</div>
<div style="position:absolute;left:743.44px;top:86.91px;font:19px/19px 'Liberation Sans', sans-serif;color:#fff;white-space:pre;transform:scaleX(0.9647);transform-origin:0 0;">Review</div>
<div style="position:absolute;left:834.20px;top:86.91px;font:19px/19px 'Liberation Sans', sans-serif;color:#fff;white-space:pre;transform:scaleX(0.9923);transform-origin:0 0;">View</div>
<div style="position:absolute;left:904.54px;top:86.91px;font:19px/19px 'Liberation Sans', sans-serif;color:#fff;white-space:pre;transform:scaleX(1.0584);transform-origin:0 0;">Help</div>
<div style="position:absolute;left:974.50px;top:86.91px;font:19px/19px 'Liberation Sans', sans-serif;color:#fff;white-space:pre;transform:scaleX(1.0453);transform-origin:0 0;">Acrobat</div>
<div style="position:absolute;left:99.74px;top:86.91px;font:bold 19px/19px 'Liberation Sans', sans-serif;color:#fff;white-space:pre;transform:scaleX(1.0582);transform-origin:0 0;">Home</div>
<div style="position:absolute;left:1548.50px;top:86.49px;font:19.5px/19.5px 'Liberation Sans', sans-serif;color:#fff;white-space:pre;transform:scaleX(0.9892);transform-origin:0 0;">Comments</div>
<div style="position:absolute;left:1699.55px;top:86.49px;font:19.5px/19.5px 'Liberation Sans', sans-serif;color:#fff;white-space:pre;transform:scaleX(1.0454);transform-origin:0 0;">Editing</div>
<div style="position:absolute;left:1829.80px;top:85.79px;font:19.5px/19.5px 'Liberation Sans', sans-serif;color:#000;white-space:pre;transform:scaleX(0.9357);transform-origin:0 0;">Share</div>
<div style="position:absolute;left:40.12px;top:183.51px;font:18.3px/18.3px 'Liberation Sans', sans-serif;color:#fff;white-space:pre;transform:scaleX(0.8820);transform-origin:0 0;">Paste</div>
<div style="position:absolute;left:34.30px;top:243.88px;font:15.5px/15.5px 'Liberation Sans', sans-serif;color:#fff;white-space:pre;transform:scaleX(1.0301);transform-origin:0 0;">Clipboard</div>
<div style="position:absolute;left:158.40px;top:131.74px;font:19.5px/19.5px 'Liberation Sans', sans-serif;color:#fff;white-space:pre;transform:scaleX(0.8859);transform-origin:0 0;">Calibri (Body)</div>
<div style="position:absolute;left:421.70px;top:131.74px;font:19.5px/19.5px 'Liberation Sans', sans-serif;color:#fff;white-space:pre;transform:scaleX(0.9067);transform-origin:0 0;">22</div>
<div style="position:absolute;left:289.50px;top:243.88px;font:15.5px/15.5px 'Liberation Sans', sans-serif;color:#fff;white-space:pre;transform:scaleX(1.0030);transform-origin:0 0;">Font</div>
<div style="position:absolute;left:589.20px;top:243.88px;font:15.5px/15.5px 'Liberation Sans', sans-serif;color:#fff;white-space:pre;transform:scaleX(0.9963);transform-origin:0 0;">Paragraph</div>
<div style="position:absolute;left:802.60px;top:181.11px;font:18.3px/18.3px 'Liberation Sans', sans-serif;color:#fff;white-space:pre;transform:scaleX(0.8783);transform-origin:0 0;">Styles</div>
<div style="position:absolute;left:792.60px;top:243.88px;font:15.5px/15.5px 'Liberation Sans', sans-serif;color:#fff;white-space:pre;transform:scaleX(0.9115);transform-origin:0 0;">Styles</div>
<div style="position:absolute;left:879.91px;top:178.61px;font:18.3px/18.3px 'Liberation Sans', sans-serif;color:#fff;white-space:pre;transform:scaleX(0.9883);transform-origin:0 0;">Editing</div>
<div style="position:absolute;left:963.90px;top:181.71px;font:18.3px/18.3px 'Liberation Sans', sans-serif;color:#fff;white-space:pre;transform:scaleX(0.9303);transform-origin:0 0;">Create and Share</div>
<div style="position:absolute;left:986.40px;top:205.51px;font:18.3px/18.3px 'Liberation Sans', sans-serif;color:#fff;white-space:pre;transform:scaleX(0.9540);transform-origin:0 0;">Adobe PDF</div>
<div style="position:absolute;left:1117.06px;top:181.71px;font:18.3px/18.3px 'Liberation Sans', sans-serif;color:#fff;white-space:pre;transform:scaleX(0.9446);transform-origin:0 0;">Request</div>
<div style="position:absolute;left:1108.20px;top:205.51px;font:18.3px/18.3px 'Liberation Sans', sans-serif;color:#fff;white-space:pre;transform:scaleX(0.9409);transform-origin:0 0;">Signatures</div>
<div style="position:absolute;left:1025.80px;top:244.48px;font:15.5px/15.5px 'Liberation Sans', sans-serif;color:#fff;white-space:pre;">Adobe Acrobat</div>
<div style="position:absolute;left:1221.63px;top:183.91px;font:18.3px/18.3px 'Liberation Sans', sans-serif;color:#fff;white-space:pre;transform:scaleX(0.9743);transform-origin:0 0;">Dictate</div>
<div style="position:absolute;left:1231.00px;top:244.48px;font:15.5px/15.5px 'Liberation Sans', sans-serif;color:#fff;white-space:pre;transform:scaleX(0.9813);transform-origin:0 0;">Voice</div>
<div style="position:absolute;left:1311.61px;top:181.71px;font:18.3px/18.3px 'Liberation Sans', sans-serif;color:#fff;white-space:pre;transform:scaleX(0.9942);transform-origin:0 0;">Editor</div>
<div style="position:absolute;left:1314.38px;top:244.48px;font:15.5px/15.5px 'Liberation Sans', sans-serif;color:#fff;white-space:pre;transform:scaleX(1.0221);transform-origin:0 0;">Editor</div>
<div style="position:absolute;left:1394.20px;top:181.71px;font:18.3px/18.3px 'Liberation Sans', sans-serif;color:#fff;white-space:pre;">Add-ins</div>
<div style="position:absolute;left:1398.40px;top:244.48px;font:15.5px/15.5px 'Liberation Sans', sans-serif;color:#fff;white-space:pre;">Add-ins</div>
<div style="position:absolute;left:606px;top:345px;width:668px;height:49px;background:#ff4d4d;"></div>
<div style="position:absolute;left:606px;top:394px;width:676px;height:48px;background:#ff4d4d;"></div>
<div style="position:absolute;left:606px;top:442px;width:624px;height:49px;background:#ff4d4d;"></div>
<div style="position:absolute;left:606px;top:491px;width:371px;height:49px;background:#006a00;"></div>
<div style="position:absolute;left:642px;top:540px;width:492px;height:49px;background:#006a00;"></div>
<div style="position:absolute;left:642px;top:589px;width:529px;height:49px;background:#006a00;"></div>
<div style="position:absolute;left:642px;top:638px;width:603px;height:48px;background:#006a00;"></div>
<div style="position:absolute;left:606px;top:686px;width:702px;height:49px;background:#006a00;"></div>
<div style="position:absolute;left:642px;top:735px;width:632px;height:48px;background:#006a00;"></div>
<div style="position:absolute;left:642px;top:931px;width:513px;height:44px;background:#006a00;"></div>
<div style="position:absolute;left:607.10px;top:354.03px;font:34.8px/34.8px 'Liberation Sans', sans-serif;color:#f4f4f4;white-space:pre;transform:scaleX(0.8986);transform-origin:0 0;-webkit-text-stroke:0.45px #f4f4f4;">ROB</div>
<div style="position:absolute;left:685.05px;top:354.03px;font:34.8px/34.8px 'Liberation Sans', sans-serif;color:#f4f4f4;white-space:pre;transform:scaleX(0.8820);transform-origin:0 0;-webkit-text-stroke:0.45px #f4f4f4;">I</div>
<div style="position:absolute;left:704.91px;top:354.03px;font:34.8px/34.8px 'Liberation Sans', sans-serif;color:#f4f4f4;white-space:pre;transform:scaleX(1.0704);transform-origin:0 0;-webkit-text-stroke:0.45px #f4f4f4;">would</div>
<div style="position:absolute;left:813.27px;top:354.03px;font:34.8px/34.8px 'Liberation Sans', sans-serif;color:#f4f4f4;white-space:pre;transform:scaleX(1.0588);transform-origin:0 0;-webkit-text-stroke:0.45px #f4f4f4;">like</div>
<div style="position:absolute;left:878.20px;top:354.03px;font:34.8px/34.8px 'Liberation Sans', sans-serif;color:#f4f4f4;white-space:pre;transform:scaleX(1.0396);transform-origin:0 0;-webkit-text-stroke:0.45px #f4f4f4;">these</div>
<div style="position:absolute;left:977.05px;top:354.03px;font:34.8px/34.8px 'Liberation Sans', sans-serif;color:#f4f4f4;white-space:pre;transform:scaleX(1.0121);transform-origin:0 0;-webkit-text-stroke:0.45px #f4f4f4;">stats</div>
<div style="position:absolute;left:1061.99px;top:354.03px;font:34.8px/34.8px 'Liberation Sans', sans-serif;color:#f4f4f4;white-space:pre;transform:scaleX(1.1609);transform-origin:0 0;-webkit-text-stroke:0.45px #f4f4f4;">to</div>
<div style="position:absolute;left:1105.27px;top:354.03px;font:34.8px/34.8px 'Liberation Sans', sans-serif;color:#f4f4f4;white-space:pre;transform:scaleX(1.0291);transform-origin:0 0;-webkit-text-stroke:0.45px #f4f4f4;">be</div>
<div style="position:absolute;left:1154.49px;top:354.03px;font:34.8px/34.8px 'Liberation Sans', sans-serif;color:#f4f4f4;white-space:pre;transform:scaleX(0.9771);transform-origin:0 0;-webkit-text-stroke:0.45px #f4f4f4;">visual…</div>
<div style="position:absolute;left:605.87px;top:403.03px;font:34.8px/34.8px 'Liberation Sans', sans-serif;color:#f4f4f4;white-space:pre;transform:scaleX(1.0666);transform-origin:0 0;-webkit-text-stroke:0.45px #f4f4f4;">however</div>
<div style="position:absolute;left:756.61px;top:403.03px;font:34.8px/34.8px 'Liberation Sans', sans-serif;color:#f4f4f4;white-space:pre;transform:scaleX(1.0433);transform-origin:0 0;-webkit-text-stroke:0.45px #f4f4f4;">you</div>
<div style="position:absolute;left:826.14px;top:403.03px;font:34.8px/34.8px 'Liberation Sans', sans-serif;color:#f4f4f4;white-space:pre;transform:scaleX(1.0989);transform-origin:0 0;-webkit-text-stroke:0.45px #f4f4f4;">think</div>
<div style="position:absolute;left:916.72px;top:403.03px;font:34.8px/34.8px 'Liberation Sans', sans-serif;color:#f4f4f4;white-space:pre;transform:scaleX(1.2508);transform-origin:0 0;-webkit-text-stroke:0.45px #f4f4f4;">it</div>
<div style="position:absolute;left:949.46px;top:403.03px;font:34.8px/34.8px 'Liberation Sans', sans-serif;color:#f4f4f4;white-space:pre;transform:scaleX(0.9828);transform-origin:0 0;-webkit-text-stroke:0.45px #f4f4f4;">best…</div>
<div style="position:absolute;left:1055.66px;top:403.03px;font:34.8px/34.8px 'Liberation Sans', sans-serif;color:#f4f4f4;white-space:pre;transform:scaleX(1.0857);transform-origin:0 0;-webkit-text-stroke:0.45px #f4f4f4;">might</div>
<div style="position:absolute;left:1158.86px;top:403.03px;font:34.8px/34.8px 'Liberation Sans', sans-serif;color:#f4f4f4;white-space:pre;transform:scaleX(1.0344);transform-origin:0 0;-webkit-text-stroke:0.45px #f4f4f4;">be</div>
<div style="position:absolute;left:1208.65px;top:403.03px;font:34.8px/34.8px 'Liberation Sans', sans-serif;color:#f4f4f4;white-space:pre;transform:scaleX(1.0462);transform-origin:0 0;-webkit-text-stroke:0.45px #f4f4f4;">hard</div>
<div style="position:absolute;left:607.50px;top:451.03px;font:34.8px/34.8px 'Liberation Sans', sans-serif;color:#f4f4f4;white-space:pre;transform:scaleX(1.1667);transform-origin:0 0;-webkit-text-stroke:0.45px #f4f4f4;">to</div>
<div style="position:absolute;left:650.46px;top:451.03px;font:34.8px/34.8px 'Liberation Sans', sans-serif;color:#f4f4f4;white-space:pre;transform:scaleX(1.0491);transform-origin:0 0;-webkit-text-stroke:0.45px #f4f4f4;">get</div>
<div style="position:absolute;left:712.69px;top:451.03px;font:34.8px/34.8px 'Liberation Sans', sans-serif;color:#f4f4f4;white-space:pre;transform:scaleX(1.0172);transform-origin:0 0;-webkit-text-stroke:0.45px #f4f4f4;">10</div>
<div style="position:absolute;left:761.15px;top:451.03px;font:34.8px/34.8px 'Liberation Sans', sans-serif;color:#f4f4f4;white-space:pre;transform:scaleX(1.0482);transform-origin:0 0;-webkit-text-stroke:0.45px #f4f4f4;">on</div>
<div style="position:absolute;left:813.33px;top:451.03px;font:34.8px/34.8px 'Liberation Sans', sans-serif;color:#f4f4f4;white-space:pre;transform:scaleX(0.9363);transform-origin:0 0;-webkit-text-stroke:0.45px #f4f4f4;">1</div>
<div style="position:absolute;left:842.36px;top:451.03px;font:34.8px/34.8px 'Liberation Sans', sans-serif;color:#f4f4f4;white-space:pre;transform:scaleX(0.9704);transform-origin:0 0;-webkit-text-stroke:0.45px #f4f4f4;">slide…</div>
<div style="position:absolute;left:952.98px;top:451.03px;font:34.8px/34.8px 'Liberation Sans', sans-serif;color:#f4f4f4;white-space:pre;transform:scaleX(1.0318);transform-origin:0 0;-webkit-text-stroke:0.45px #f4f4f4;">perhaps</div>
<div style="position:absolute;left:1093.54px;top:451.03px;font:34.8px/34.8px 'Liberation Sans', sans-serif;color:#f4f4f4;white-space:pre;transform:scaleX(0.9443);transform-origin:0 0;-webkit-text-stroke:0.45px #f4f4f4;">5</div>
<div style="position:absolute;left:1122.53px;top:451.03px;font:34.8px/34.8px 'Liberation Sans', sans-serif;color:#f4f4f4;white-space:pre;transform:scaleX(1.0159);transform-origin:0 0;-webkit-text-stroke:0.45px #f4f4f4;">and</div>
<div style="position:absolute;left:1192.86px;top:451.03px;font:34.8px/34.8px 'Liberation Sans', sans-serif;color:#f4f4f4;white-space:pre;transform:scaleX(0.9242);transform-origin:0 0;-webkit-text-stroke:0.45px #f4f4f4;">5?</div>
<div style="position:absolute;left:606.29px;top:500.03px;font:34.8px/34.8px 'Liberation Sans', sans-serif;color:#f4f4f4;white-space:pre;transform:scaleX(1.0051);transform-origin:0 0;-webkit-text-stroke:0.45px #f4f4f4;">Families</div>
<div style="position:absolute;left:747.02px;top:500.03px;font:34.8px/34.8px 'Liberation Sans', sans-serif;color:#f4f4f4;white-space:pre;transform:scaleX(1.0353);transform-origin:0 0;-webkit-text-stroke:0.45px #f4f4f4;">are</div>
<div style="position:absolute;left:808.58px;top:500.03px;font:34.8px/34.8px 'Liberation Sans', sans-serif;color:#f4f4f4;white-space:pre;transform:scaleX(1.0892);transform-origin:0 0;-webkit-text-stroke:0.45px #f4f4f4;">fracturing.</div>
<div style="position:absolute;left:641.83px;top:549.03px;font:34.8px/34.8px 'Liberation Sans', sans-serif;color:#f4f4f4;white-space:pre;transform:scaleX(1.0841);transform-origin:0 0;-webkit-text-stroke:0.45px #f4f4f4;">1.</div>
<div style="position:absolute;left:679.04px;top:549.03px;font:34.8px/34.8px 'Liberation Sans', sans-serif;color:#f4f4f4;white-space:pre;transform:scaleX(0.9816);transform-origin:0 0;-webkit-text-stroke:0.45px #f4f4f4;">Rising</div>
<div style="position:absolute;left:782.96px;top:549.03px;font:34.8px/34.8px 'Liberation Sans', sans-serif;color:#f4f4f4;white-space:pre;transform:scaleX(1.0391);transform-origin:0 0;-webkit-text-stroke:0.45px #f4f4f4;">Divorce</div>
<div style="position:absolute;left:915.49px;top:549.03px;font:34.8px/34.8px 'Liberation Sans', sans-serif;color:#f4f4f4;white-space:pre;transform:scaleX(0.9634);transform-origin:0 0;-webkit-text-stroke:0.45px #f4f4f4;">Rates</div>
<div style="position:absolute;left:1013.72px;top:549.03px;font:34.8px/34.8px 'Liberation Sans', sans-serif;color:#f4f4f4;white-space:pre;transform:scaleX(1.0041);transform-origin:0 0;-webkit-text-stroke:0.45px #f4f4f4;">40-50%</div>
<div style="position:absolute;left:642.54px;top:598.03px;font:34.8px/34.8px 'Liberation Sans', sans-serif;color:#f4f4f4;white-space:pre;transform:scaleX(1.0571);transform-origin:0 0;-webkit-text-stroke:0.45px #f4f4f4;">2.</div>
<div style="position:absolute;left:678.38px;top:598.03px;font:34.8px/34.8px 'Liberation Sans', sans-serif;color:#f4f4f4;white-space:pre;transform:scaleX(1.0196);transform-origin:0 0;-webkit-text-stroke:0.45px #f4f4f4;">Single-Parent</div>
<div style="position:absolute;left:904.08px;top:598.03px;font:34.8px/34.8px 'Liberation Sans', sans-serif;color:#f4f4f4;white-space:pre;transform:scaleX(1.0244);transform-origin:0 0;-webkit-text-stroke:0.45px #f4f4f4;">Households</div>
<div style="position:absolute;left:1103.10px;top:598.03px;font:34.8px/34.8px 'Liberation Sans', sans-serif;color:#f4f4f4;white-space:pre;transform:scaleX(0.9722);transform-origin:0 0;-webkit-text-stroke:0.45px #f4f4f4;">23%</div>
<div style="position:absolute;left:642.54px;top:647.03px;font:34.8px/34.8px 'Liberation Sans', sans-serif;color:#f4f4f4;white-space:pre;transform:scaleX(1.0571);transform-origin:0 0;-webkit-text-stroke:0.45px #f4f4f4;">3.</div>
<div style="position:absolute;left:678.91px;top:647.03px;font:34.8px/34.8px 'Liberation Sans', sans-serif;color:#f4f4f4;white-space:pre;transform:scaleX(1.0441);transform-origin:0 0;-webkit-text-stroke:0.45px #f4f4f4;">Poverty</div>
<div style="position:absolute;left:813.52px;top:647.03px;font:34.8px/34.8px 'Liberation Sans', sans-serif;color:#f4f4f4;white-space:pre;transform:scaleX(0.9628);transform-origin:0 0;-webkit-text-stroke:0.45px #f4f4f4;">16%</div>
<div style="position:absolute;left:890.24px;top:647.03px;font:34.8px/34.8px 'Liberation Sans', sans-serif;color:#f4f4f4;white-space:pre;transform:scaleX(1.0714);transform-origin:0 0;-webkit-text-stroke:0.45px #f4f4f4;">children</div>
<div style="position:absolute;left:1031.58px;top:647.03px;font:34.8px/34.8px 'Liberation Sans', sans-serif;color:#f4f4f4;white-space:pre;transform:scaleX(1.0701);transform-origin:0 0;-webkit-text-stroke:0.45px #f4f4f4;">(11.6</div>
<div style="position:absolute;left:1123.31px;top:647.03px;font:34.8px/34.8px 'Liberation Sans', sans-serif;color:#f4f4f4;white-space:pre;transform:scaleX(1.0955);transform-origin:0 0;-webkit-text-stroke:0.45px #f4f4f4;">million)</div>
<div style="position:absolute;left:679.03px;top:695.03px;font:34.8px/34.8px 'Liberation Sans', sans-serif;color:#f4f4f4;white-space:pre;transform:scaleX(0.9727);transform-origin:0 0;-webkit-text-stroke:0.45px #f4f4f4;">30%</div>
<div style="position:absolute;left:756.51px;top:695.03px;font:34.8px/34.8px 'Liberation Sans', sans-serif;color:#f4f4f4;white-space:pre;transform:scaleX(1.1108);transform-origin:0 0;-webkit-text-stroke:0.45px #f4f4f4;">of</div>
<div style="position:absolute;left:798.69px;top:695.03px;font:34.8px/34.8px 'Liberation Sans', sans-serif;color:#f4f4f4;white-space:pre;transform:scaleX(1.0719);transform-origin:0 0;-webkit-text-stroke:0.45px #f4f4f4;">children</div>
<div style="position:absolute;left:939.31px;top:695.03px;font:34.8px/34.8px 'Liberation Sans', sans-serif;color:#f4f4f4;white-space:pre;transform:scaleX(1.0767);transform-origin:0 0;-webkit-text-stroke:0.45px #f4f4f4;">in</div>
<div style="position:absolute;left:979.84px;top:695.03px;font:34.8px/34.8px 'Liberation Sans', sans-serif;color:#f4f4f4;white-space:pre;transform:scaleX(1.0131);transform-origin:0 0;-webkit-text-stroke:0.45px #f4f4f4;">single</div>
<div style="position:absolute;left:1081.63px;top:695.03px;font:34.8px/34.8px 'Liberation Sans', sans-serif;color:#f4f4f4;white-space:pre;transform:scaleX(1.0800);transform-origin:0 0;-webkit-text-stroke:0.45px #f4f4f4;">parent</div>
<div style="position:absolute;left:1199.00px;top:695.03px;font:34.8px/34.8px 'Liberation Sans', sans-serif;color:#f4f4f4;white-space:pre;transform:scaleX(1.0313);transform-origin:0 0;-webkit-text-stroke:0.45px #f4f4f4;">homes</div>
<div style="position:absolute;left:643.60px;top:744.03px;font:34.8px/34.8px 'Liberation Sans', sans-serif;color:#f4f4f4;white-space:pre;transform:scaleX(1.0170);transform-origin:0 0;-webkit-text-stroke:0.45px #f4f4f4;">4.</div>
<div style="position:absolute;left:679.00px;top:744.03px;font:34.8px/34.8px 'Liberation Sans', sans-serif;color:#f4f4f4;white-space:pre;-webkit-text-stroke:0.45px #f4f4f4;">Food</div>
<div style="position:absolute;left:768.92px;top:744.03px;font:34.8px/34.8px 'Liberation Sans', sans-serif;color:#f4f4f4;white-space:pre;transform:scaleX(1.0615);transform-origin:0 0;-webkit-text-stroke:0.45px #f4f4f4;">Insecurity</div>
<div style="position:absolute;left:938.41px;top:744.03px;font:34.8px/34.8px 'Liberation Sans', sans-serif;color:#f4f4f4;white-space:pre;transform:scaleX(0.9891);transform-origin:0 0;-webkit-text-stroke:0.45px #f4f4f4;">12.5%</div>
<div style="position:absolute;left:1045.74px;top:744.03px;font:34.8px/34.8px 'Liberation Sans', sans-serif;color:#f4f4f4;white-space:pre;transform:scaleX(1.1122);transform-origin:0 0;-webkit-text-stroke:0.45px #f4f4f4;">of</div>
<div style="position:absolute;left:1088.41px;top:744.03px;font:34.8px/34.8px 'Liberation Sans', sans-serif;color:#f4f4f4;white-space:pre;transform:scaleX(1.0383);transform-origin:0 0;-webkit-text-stroke:0.45px #f4f4f4;">households</div>
<div style="position:absolute;left:642.96px;top:939.53px;font:34.8px/34.8px 'Liberation Sans', sans-serif;color:#f4f4f4;white-space:pre;transform:scaleX(1.0413);transform-origin:0 0;-webkit-text-stroke:0.45px #f4f4f4;">5.</div>
<div style="position:absolute;left:678.21px;top:939.53px;font:34.8px/34.8px 'Liberation Sans', sans-serif;color:#f4f4f4;white-space:pre;transform:scaleX(0.9850);transform-origin:0 0;-webkit-text-stroke:0.45px #f4f4f4;">Screen</div>
<div style="position:absolute;left:797.41px;top:939.53px;font:34.8px/34.8px 'Liberation Sans', sans-serif;color:#f4f4f4;white-space:pre;transform:scaleX(1.0501);transform-origin:0 0;-webkit-text-stroke:0.45px #f4f4f4;">Time</div>
<div style="position:absolute;left:886.75px;top:939.53px;font:34.8px/34.8px 'Liberation Sans', sans-serif;color:#f4f4f4;white-space:pre;transform:scaleX(1.1584);transform-origin:0 0;-webkit-text-stroke:0.45px #f4f4f4;">&amp;</div>
<div style="position:absolute;left:923.59px;top:939.53px;font:34.8px/34.8px 'Liberation Sans', sans-serif;color:#f4f4f4;white-space:pre;transform:scaleX(1.0967);transform-origin:0 0;-webkit-text-stroke:0.45px #f4f4f4;">Mental</div>
<div style="position:absolute;left:1048.75px;top:939.53px;font:34.8px/34.8px 'Liberation Sans', sans-serif;color:#f4f4f4;white-space:pre;transform:scaleX(1.0506);transform-origin:0 0;-webkit-text-stroke:0.45px #f4f4f4;">Health</div>
<div style="position:absolute;left:1312.73px;top:816.72px;font:21px/21px 'Liberation Sans', sans-serif;color:#a8a8a8;white-space:pre;transform:scaleX(0.8700);transform-origin:0 0;">1</div>
<div style="position:absolute;left:15.42px;top:985.18px;font:15.5px/15.5px 'Liberation Sans', sans-serif;color:#e6e6e6;white-space:pre;transform:scaleX(0.9781);transform-origin:0 0;">Page 1 of 13</div>
<div style="position:absolute;left:130.23px;top:985.18px;font:15.5px/15.5px 'Liberation Sans', sans-serif;color:#e6e6e6;white-space:pre;transform:scaleX(1.0235);transform-origin:0 0;">1071 words</div>
<div style="position:absolute;left:239.80px;top:985.18px;font:15.5px/15.5px 'Liberation Sans', sans-serif;color:#e6e6e6;white-space:pre;transform:scaleX(0.9676);transform-origin:0 0;">Text Predictions: On</div>
<div style="position:absolute;left:428.90px;top:985.18px;font:15.5px/15.5px 'Liberation Sans', sans-serif;color:#e6e6e6;white-space:pre;transform:scaleX(0.9879);transform-origin:0 0;">Accessibility: Unavailable</div>
<div style="position:absolute;left:1418.57px;top:985.18px;font:15.5px/15.5px 'Liberation Sans', sans-serif;color:#e6e6e6;white-space:pre;transform:scaleX(0.9335);transform-origin:0 0;">Focus</div>
<div style="position:absolute;left:1868.90px;top:985.18px;font:15.5px/15.5px 'Liberation Sans', sans-serif;color:#e6e6e6;white-space:pre;">100%</div>
</body></html>
